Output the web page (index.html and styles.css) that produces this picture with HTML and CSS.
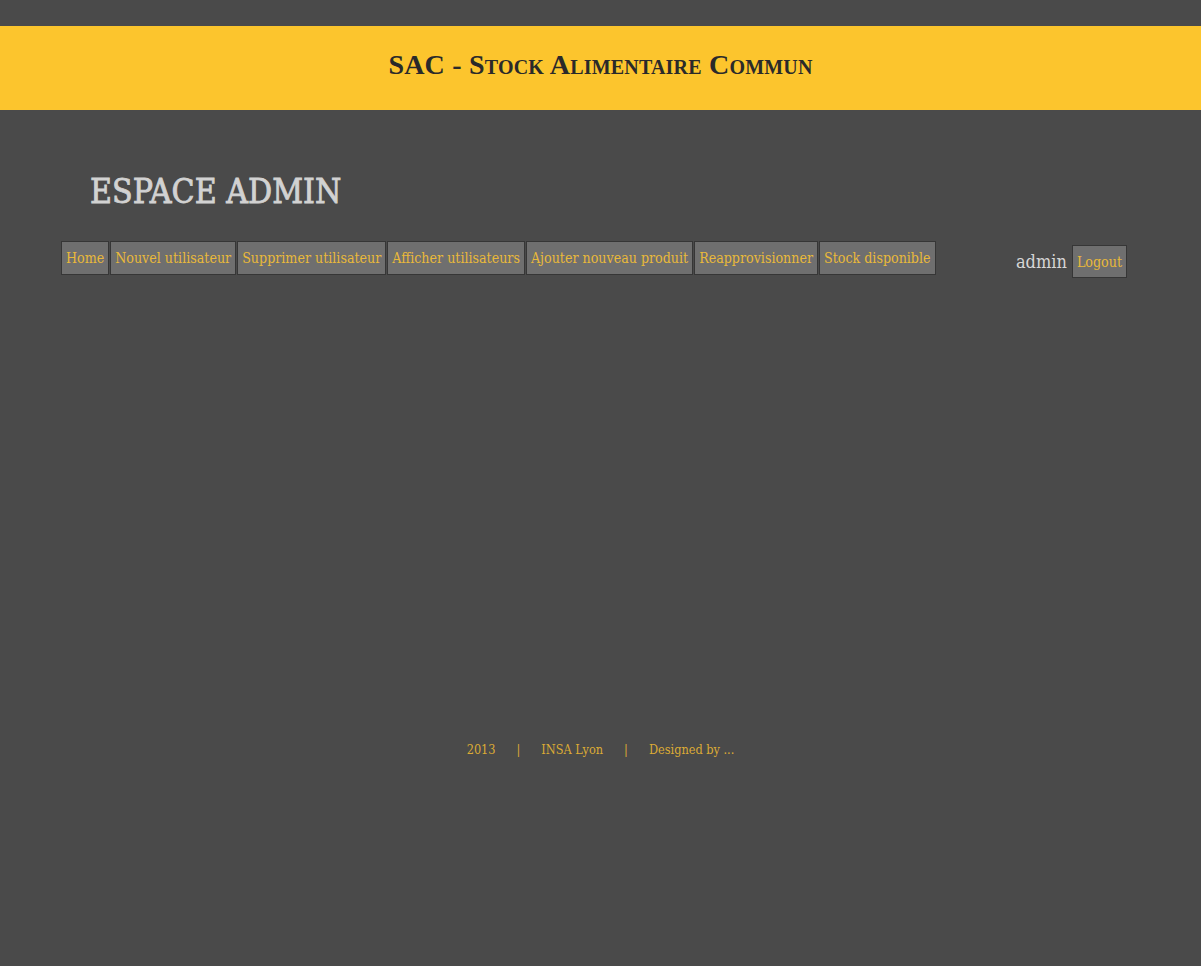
FILE: index.html
```html
<!DOCTYPE html>
<html lang="fr">
<head>
<meta charset="utf-8">
<title>SAC - Espace admin</title>
<link rel="stylesheet" href="styles.css">
</head>
<body>
<div class="page">
  <div class="topbar"></div>
  <header class="banner">
    <h1 class="banner-title">SAC - Stock Alimentaire Commun</h1>
  </header>
  <main class="content">
    <h2 class="section-title">ESPACE ADMIN</h2>
    <div class="nav-row">
      <nav class="menu">
        <a class="btn" href="#">Home</a>
        <a class="btn" href="#">Nouvel utilisateur</a>
        <a class="btn" href="#">Supprimer utilisateur</a>
        <a class="btn" href="#">Afficher utilisateurs</a>
        <a class="btn" href="#">Ajouter nouveau produit</a>
        <a class="btn" href="#">Reapprovisionner</a>
        <a class="btn" href="#">Stock disponible</a>
      </nav>
      <div class="user">
        <span class="user-name">admin</span>
        <a class="btn btn-logout" href="#">Logout</a>
      </div>
    </div>
  </main>
  <footer class="footer">
    <span>2013</span>
    <span class="sep">|</span>
    <span>INSA Lyon</span>
    <span class="sep">|</span>
    <span>Designed by ...</span>
  </footer>
</div>
</body>
</html>
```
FILE: styles.css
```css
html, body {
  margin: 0;
  padding: 0;
  background: #4a4a4a;
}
body {
  font-family: "DejaVu Serif", serif;
  min-height: 966px;
}
.page {
  min-height: 966px;
  display: flex;
  flex-direction: column;
}
.topbar {
  height: 26px;
}
.banner {
  height: 84px;
  box-sizing: border-box;
  padding-bottom: 6px;
  background: #fcc52d;
  display: flex;
  align-items: center;
  justify-content: center;
}
.banner-title {
  margin: 0;
  font-family: "Liberation Serif", serif;
  font-variant: small-caps;
  font-weight: bold;
  font-size: 28px;
  color: #2a2a2a;
  letter-spacing: 0.2px;
}
.content {
  padding: 60px 74px 0 61px;
}
.section-title {
  margin: 0 0 27px 29px;
  font-family: "DejaVu Serif", serif;
  font-stretch: condensed;
  font-weight: normal;
  font-size: 33.5px;
  color: #d2d2d2;
  line-height: 44px;
  -webkit-text-stroke: 0.8px #d2d2d2;
}
.nav-row {
  display: flex;
  justify-content: space-between;
  align-items: flex-start;
}
.menu {
  display: flex;
  gap: 1px;
}
.btn {
  display: inline-flex;
  align-items: center;
  height: 32px;
  padding: 0 4px;
  background: #6f6f6f;
  border: 1px solid #363636;
  color: #e9b93a;
  text-decoration: none;
  font-family: "DejaVu Serif", serif;
  font-stretch: condensed;
  font-size: 14.1px;
  white-space: nowrap;
}
.user {
  display: flex;
  align-items: center;
  gap: 5px;
  padding-top: 4px;
}
.user-name {
  font-family: "DejaVu Serif", serif;
  font-stretch: condensed;
  font-size: 18px;
  color: #d6d6d6;
}
.btn-logout {
  height: 31px;
}
.footer {
  margin-top: 464px;
  display: flex;
  justify-content: center;
  gap: 21px;
  font-family: "DejaVu Serif", serif;
  font-stretch: condensed;
  font-size: 12.6px;
  color: #dcaa35;
}
```
